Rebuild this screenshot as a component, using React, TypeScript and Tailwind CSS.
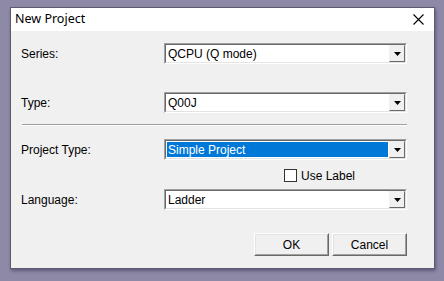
const font = { fontFamily: "'Liberation Sans', Arial, sans-serif" };

function Arrow() {
  return (
    <svg width="7" height="4" viewBox="0 0 7 4">
      <path d="M0 0h7L3.5 4z" fill="#000" />
    </svg>
  );
}

function Combo({ value, selected }: { value: string; selected?: boolean }) {
  return (
    <div className="w-[243px] h-[21px] border border-t-[#a0a0a0] border-l-[#a0a0a0] border-b-white border-r-white">
      <div className="h-full flex border border-t-[#696969] border-l-[#696969] border-b-[#e3e3e3] border-r-[#e3e3e3] bg-white">
        <div className="flex-1 flex items-center p-[1px]">
          <div
            className={`w-full h-full flex items-center pl-[1px] ${
              selected ? "bg-[#0078d7] text-white" : "text-black"
            }`}
          >
            {value}
          </div>
        </div>
        <div className="w-[16px] h-full border border-t-[#f0f0f0] border-l-[#f0f0f0] border-b-[#696969] border-r-[#696969] bg-[#f0f0f0] flex items-center justify-center">
          <Arrow />
        </div>
      </div>
    </div>
  );
}

function Row({ label, children, className }: { label: string; children: React.ReactNode; className?: string }) {
  return (
    <div className={`flex items-center ${className ?? ""}`}>
      <div className="w-[143px]">{label}</div>
      {children}
    </div>
  );
}

function Button({ label }: { label: string }) {
  return (
    <div className="w-[75px] h-[23px] border border-t-[#fff] border-l-[#fff] border-b-[#696969] border-r-[#696969]">
      <div className="h-full flex items-center justify-center bg-[#f0f0f0] border border-t-[#e3e3e3] border-l-[#e3e3e3] border-b-[#a0a0a0] border-r-[#a0a0a0]">
        {label}
      </div>
    </div>
  );
}

export default function App() {
  return (
    <div className="w-[444px] h-[281px] bg-[#8d89a6] pt-[7px] pl-[10px]" style={font}>
      {/* Dialog window */}
      <div className="w-[425px] h-[262px] border border-[#5e5b70] flex flex-col shadow-[1px_2px_3px_rgba(40,35,70,0.45)] text-[12px] text-black">
        <div className="h-[23px] bg-white flex items-center justify-between pl-[4px] pr-[10px]">
          <span className="text-[12.5px]" style={{ fontFamily: "'Noto Sans', 'Liberation Sans', sans-serif" }}>
            New Project
          </span>
          <svg width="11" height="11" viewBox="0 0 11 11">
            <path d="M0.5 0.5l10 10M10.5 0.5l-10 10" stroke="#000" strokeWidth="1.1" />
          </svg>
        </div>

        <div className="flex-1 bg-[#f0f0f0] pl-[10px] pt-[12px] flex flex-col">
          <Row label="Series:">
            <Combo value="QCPU (Q mode)" />
          </Row>
          <Row label="Type:" className="mt-[28px]">
            <Combo value="Q00J" />
          </Row>

          <div className="mt-[11px] ml-[1px] w-[385px] h-[2px] border-t border-t-[#a0a0a0] border-b border-b-white" />

          <Row label="Project Type:" className="mt-[13px]">
            <Combo value="Simple Project" selected />
          </Row>
          <div className="mt-[9px] h-[13px] flex items-center pl-[263px]">
            <div className="w-[13px] h-[13px] border border-[#333] bg-white" />
            <span className="ml-[4px]">Use Label</span>
          </div>
          <Row label="Language:" className="mt-[7px]">
            <Combo value="Ladder" />
          </Row>

          <div className="mt-[23px] flex gap-[3px] pl-[233px]">
            <Button label="OK" />
            <Button label="Cancel" />
          </div>
        </div>
      </div>
    </div>
  );
}
